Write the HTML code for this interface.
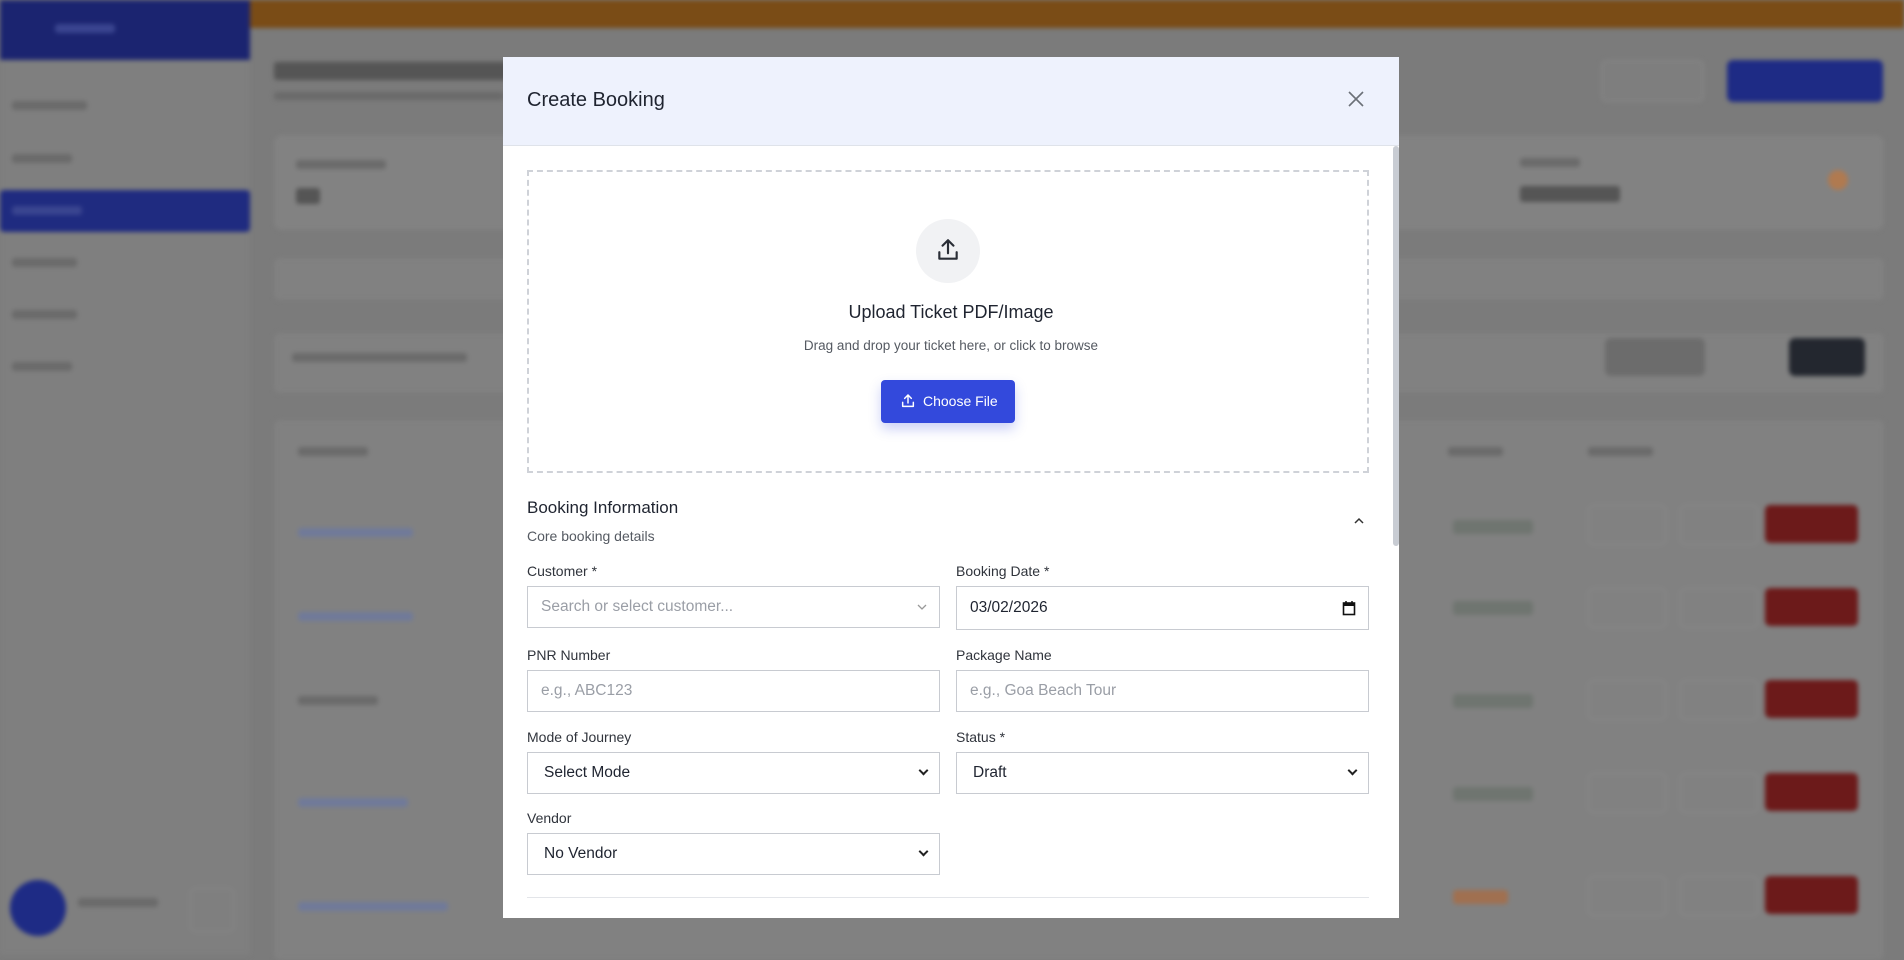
<!DOCTYPE html>
<html><head><meta charset="utf-8"><style>
*{box-sizing:border-box;margin:0;padding:0}
body{width:1904px;height:955px;overflow:hidden;background:#7b7b7b;font-family:"Liberation Sans",sans-serif;position:relative}
.bg{position:absolute;inset:0;filter:blur(2.5px)}
.a{position:absolute}
.t{position:absolute;background:#6a6a6a;border-radius:3px;height:9px}
.vb{position:absolute;width:78px;height:40px;border:1px solid #8c8c8c;border-radius:6px}
.modal{position:absolute;left:503px;top:57px;width:896px;height:861px;background:#fff;overflow:hidden}
.hd{height:89px;background:#eef2fd;border-bottom:1px solid #dfe3ea;position:relative}
.hd h1{position:absolute;left:24px;top:32px;font-size:20px;font-weight:500;color:#1f2430}
.lbl{position:absolute;font-size:14px;color:#30343c}
.in{position:absolute;height:42px;border:1px solid #c8cbd1;background:#fff;font-size:15.5px;padding-left:13px;line-height:40px;color:#1f2430}
.ph{color:#9a9ea6}
.sel::after{content:"";position:absolute;right:12px;top:14px;width:5px;height:5px;border-right:2px solid #222;border-bottom:2px solid #222;transform:rotate(45deg)}
</style></head><body>
<div class="bg">
 <div class="a" style="left:250px;top:0;width:1654px;height:28px;background:#7a4c16"></div>
 <div class="a" style="left:0;top:0;width:250px;height:955px;background:#7f7f7f"></div>
 <div class="a" style="left:0;top:0;width:250px;height:60px;background:#1b2470"></div>
 <div class="t" style="left:55px;top:24px;width:60px;background:#3a4590"></div>
 <div class="a" style="left:0;top:190px;width:250px;height:42px;background:#1f2b80;border-radius:4px"></div>
 <div class="t" style="left:12px;top:101px;width:75px"></div><div class="t" style="left:12px;top:154px;width:60px"></div>
 <div class="t" style="left:12px;top:206px;width:70px;background:#3a4590"></div><div class="t" style="left:12px;top:258px;width:65px"></div>
 <div class="t" style="left:12px;top:310px;width:65px"></div><div class="t" style="left:12px;top:362px;width:60px"></div>
 <div class="a" style="left:10px;top:880px;width:56px;height:56px;border-radius:50%;background:#1e2b85"></div>
 <div class="t" style="left:78px;top:898px;width:80px"></div>
 <div class="a" style="left:190px;top:888px;width:44px;height:44px;border:1px solid #8a8a8a;border-radius:6px"></div>
 <div class="t" style="left:274px;top:62px;width:240px;height:18px;background:#555"></div>
 <div class="t" style="left:274px;top:92px;width:230px;height:8px"></div>
 <div class="a" style="left:274px;top:135px;width:1610px;height:95px;background:#828282;border-radius:8px"></div>
 <div class="t" style="left:296px;top:160px;width:90px"></div><div class="t" style="left:296px;top:188px;width:24px;height:16px;background:#555"></div>
 <div class="t" style="left:1520px;top:158px;width:60px"></div><div class="t" style="left:1520px;top:186px;width:100px;height:16px;background:#555"></div>
 <div class="a" style="left:1828px;top:170px;width:20px;height:20px;border-radius:50%;background:#b07a50"></div>
 <div class="a" style="left:1601px;top:60px;width:103px;height:42px;border:1px solid #8c8c8c;border-radius:6px;background:#7e7e7e"></div>
 <div class="a" style="left:1727px;top:60px;width:156px;height:42px;background:#1e2b85;border-radius:6px"></div>
 <div class="a" style="left:274px;top:258px;width:1610px;height:42px;background:#818181;border-radius:6px"></div>
 <div class="a" style="left:274px;top:333px;width:1610px;height:60px;background:#818181;border-radius:6px"></div>
 <div class="t" style="left:292px;top:353px;width:175px"></div>
 <div class="a" style="left:1605px;top:338px;width:100px;height:38px;background:#6c6c6c;border-radius:6px"></div>
 <div class="a" style="left:1789px;top:338px;width:76px;height:38px;background:#23272f;border-radius:6px"></div>
 <div class="a" style="left:274px;top:420px;width:1610px;height:540px;background:#818181;border-radius:6px"></div>
 <div class="t" style="left:298px;top:447px;width:70px"></div><div class="t" style="left:1448px;top:447px;width:55px"></div><div class="t" style="left:1588px;top:447px;width:65px"></div>
 <div class="t" style="left:298px;top:528px;width:115px;background:#707a9a"></div><div class="t" style="left:298px;top:612px;width:115px;background:#707a9a"></div>
 <div class="t" style="left:298px;top:696px;width:80px"></div><div class="t" style="left:298px;top:798px;width:110px;background:#707a9a"></div><div class="t" style="left:298px;top:902px;width:150px;background:#707a9a"></div>
 <div class="t" style="left:1453px;top:520px;width:80px;height:14px;background:#6f7570"></div><div class="t" style="left:1453px;top:601px;width:80px;height:14px;background:#6f7570"></div>
 <div class="t" style="left:1453px;top:694px;width:80px;height:14px;background:#6f7570"></div><div class="t" style="left:1453px;top:787px;width:80px;height:14px;background:#6f7570"></div>
 <div class="t" style="left:1453px;top:890px;width:55px;height:14px;background:#a07050"></div>
 <div class="vb" style="left:1588px;top:505px"></div><div class="vb" style="left:1680px;top:505px"></div>
 <div class="vb" style="left:1588px;top:588px"></div><div class="vb" style="left:1680px;top:588px"></div>
 <div class="vb" style="left:1588px;top:680px"></div><div class="vb" style="left:1680px;top:680px"></div>
 <div class="vb" style="left:1588px;top:773px"></div><div class="vb" style="left:1680px;top:773px"></div>
 <div class="vb" style="left:1588px;top:876px"></div><div class="vb" style="left:1680px;top:876px"></div>
 <div class="a" style="left:1765px;top:505px;width:93px;height:38px;background:#6c1a1a;border-radius:5px"></div>
 <div class="a" style="left:1765px;top:588px;width:93px;height:38px;background:#6c1a1a;border-radius:5px"></div>
 <div class="a" style="left:1765px;top:680px;width:93px;height:38px;background:#6c1a1a;border-radius:5px"></div>
 <div class="a" style="left:1765px;top:773px;width:93px;height:38px;background:#6c1a1a;border-radius:5px"></div>
 <div class="a" style="left:1765px;top:876px;width:93px;height:38px;background:#6c1a1a;border-radius:5px"></div>
</div>
<div class="modal">
 <div class="hd"><h1>Create Booking</h1>
  <svg class="a" style="left:844px;top:33px" width="18" height="18" viewBox="0 0 18 18"><path d="M2 2L16 16M16 2L2 16" stroke="#6b7078" stroke-width="1.6"/></svg></div>
 <div class="a" style="left:890px;top:89px;width:6px;height:400px;background:#c8ccd3;border-radius:3px"></div>
 <div class="a" style="left:24px;top:113px;width:842px;height:303px;border:2px dashed #cfd2d8"></div>
 <div class="a" style="left:413px;top:162px;width:64px;height:64px;border-radius:50%;background:#f1f2f4"></div>
 <svg class="a" style="left:432px;top:180px" width="26" height="26" viewBox="0 0 24 24" fill="none" stroke="#2a2e36" stroke-width="2" stroke-linecap="round" stroke-linejoin="round"><path d="M12 15V3M7 8l5-5 5 5M4 14v6h16v-6"/></svg>
 <div class="a" style="left:0;width:896px;top:245px;text-align:center;font-size:18px;color:#1f2430">Upload Ticket PDF/Image</div>
 <div class="a" style="left:0;width:896px;top:281px;text-align:center;font-size:13.5px;color:#555a62">Drag and drop your ticket here, or click to browse</div>
 <div class="a" style="left:378px;top:323px;width:134px;height:43px;background:#3349dc;border-radius:4px;box-shadow:0 6px 12px rgba(51,73,220,.25);color:#fff;font-size:14px;line-height:43px;padding-left:42px">Choose File</div>
 <svg class="a" style="left:397px;top:336px" width="16" height="16" viewBox="0 0 24 24" fill="none" stroke="#fff" stroke-width="2.2" stroke-linecap="round" stroke-linejoin="round"><path d="M12 15V3M7 8l5-5 5 5M4 14v6h16v-6"/></svg>
 <div class="a" style="left:24px;top:441px;font-size:17px;color:#1f2430">Booking Information</div>
 <div class="a" style="left:24px;top:471px;font-size:14px;color:#555a62">Core booking details</div>
 <svg class="a" style="left:850px;top:459px" width="12" height="10" viewBox="0 0 12 10"><path d="M2 7L6 3 10 7" stroke="#333" stroke-width="1.5" fill="none"/></svg>
 <div class="lbl" style="left:24px;top:506px">Customer *</div>
 <div class="lbl" style="left:453px;top:506px">Booking Date *</div>
 <div class="in ph" style="left:24px;top:529px;width:413px">Search or select customer...<svg class="a" style="right:12px;top:16px" width="10" height="8" viewBox="0 0 10 8"><path d="M1 2l4 4 4-4" stroke="#999" fill="none" stroke-width="1.3"/></svg></div>
 <div class="in" style="left:453px;top:529px;width:413px;height:44px;line-height:42px">03/02/2026<svg class="a" style="right:12px;top:13px" width="14" height="16" viewBox="0 0 14 16"><rect x="1.5" y="3" width="11" height="11.5" fill="none" stroke="#111" stroke-width="1.6"/><rect x="1.5" y="3" width="11" height="3" fill="#111"/><path d="M4 1v3M10 1v3" stroke="#111" stroke-width="1.5"/></svg></div>
 <div class="lbl" style="left:24px;top:590px">PNR Number</div>
 <div class="lbl" style="left:453px;top:590px">Package Name</div>
 <div class="in ph" style="left:24px;top:613px;width:413px">e.g., ABC123</div>
 <div class="in ph" style="left:453px;top:613px;width:413px">e.g., Goa Beach Tour</div>
 <div class="lbl" style="left:24px;top:672px">Mode of Journey</div>
 <div class="lbl" style="left:453px;top:672px">Status *</div>
 <div class="in sel" style="left:24px;top:695px;width:413px;padding-left:16px">Select Mode</div>
 <div class="in sel" style="left:453px;top:695px;width:413px;padding-left:16px">Draft</div>
 <div class="lbl" style="left:24px;top:753px">Vendor</div>
 <div class="in sel" style="left:24px;top:776px;width:413px;padding-left:16px">No Vendor</div>
 <div class="a" style="left:24px;top:840px;width:842px;height:1px;background:#e3e5e9"></div>
</div>
</body></html>
